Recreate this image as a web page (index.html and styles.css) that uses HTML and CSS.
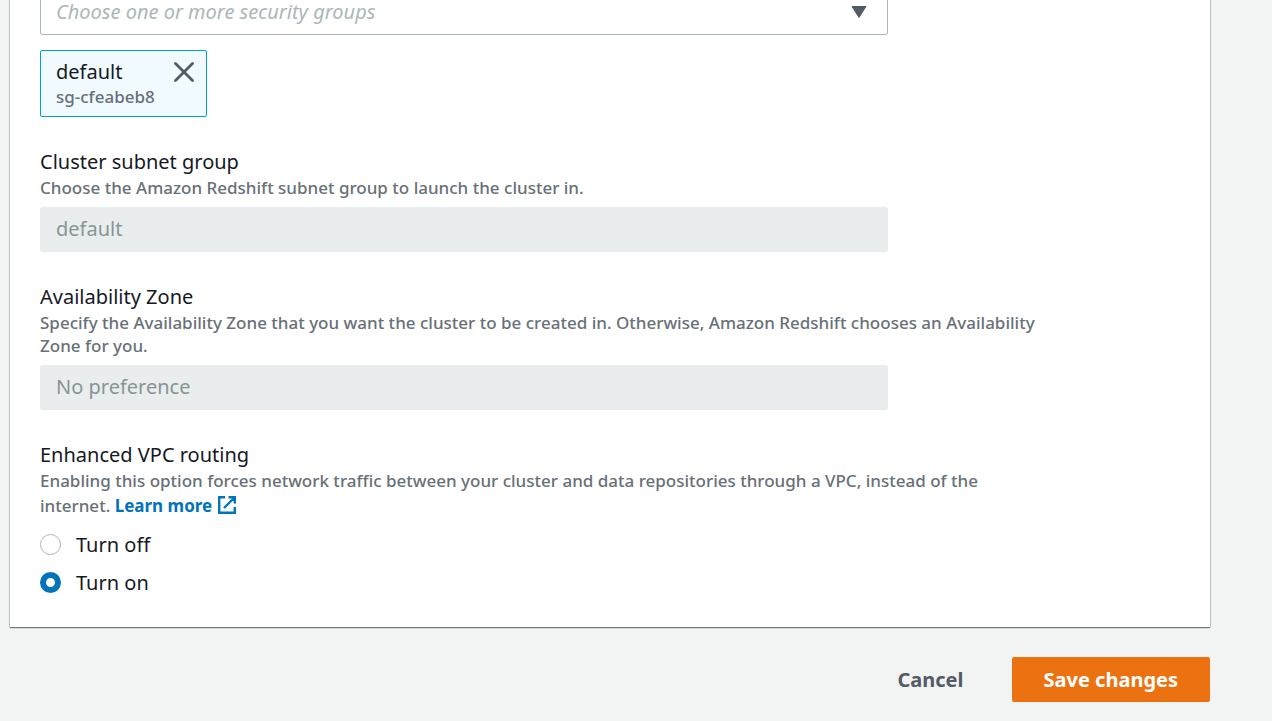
FILE: index.html
```html
<!DOCTYPE html>
<html lang="en">
<head>
<meta charset="utf-8">
<meta name="viewport" content="width=device-width, initial-scale=1">
<title>Network and security settings</title>
<link rel="stylesheet" href="styles.css">
</head>
<body>
<form class="page">
  <section class="panel">
    <div class="field">
      <div class="picker">
        <select class="control placeholder" aria-label="VPC security groups">
          <option>Choose one or more security groups</option>
        </select>
        <svg class="caret" viewBox="0 0 16 12" aria-hidden="true"><path d="M1 .5h14L8 11.500z" fill="#545b64" stroke="#545b64" stroke-linejoin="round"/></svg>
      </div>
      <div class="token">
        <div>
          <div class="token-name">default</div>
          <div class="token-id">sg-cfeabeb8</div>
        </div>
        <button class="dismiss" type="button" aria-label="Remove default">
          <svg viewBox="0 0 20 20" aria-hidden="true"><path d="M1.500 1.500l17 17M18.500 1.500l-17 17" fill="none" stroke="#545b64" stroke-width="2.800" stroke-linecap="round"/></svg>
        </button>
      </div>
    </div>

    <div class="field">
      <label class="label" for="subnet">Cluster subnet group</label>
      <p class="hint" id="subnet-hint">Choose the Amazon Redshift subnet group to launch the cluster in.</p>
      <select class="control" id="subnet" aria-describedby="subnet-hint" disabled><option>default</option></select>
    </div>

    <div class="field">
      <label class="label" for="zone">Availability Zone</label>
      <p class="hint" id="zone-hint">Specify the Availability Zone that you want the cluster to be created in. Otherwise, Amazon Redshift chooses an Availability Zone for you.</p>
      <select class="control" id="zone" aria-describedby="zone-hint" disabled><option>No preference</option></select>
    </div>

    <div class="field" role="radiogroup" aria-labelledby="routing">
      <div class="label" id="routing">Enhanced VPC routing</div>
      <p class="hint">Enabling this option forces network traffic between your cluster and data repositories through a VPC, instead of the internet. <a class="link" href="#">Learn more <svg class="external" viewBox="0 0 20 20" aria-hidden="true"><path d="M8 2.200H2.200v15.600h15.600V12M11.500 2.200h6.300v6.300M17.500 2.500L7 13" fill="none" stroke="#0073bb" stroke-width="2.400"/></svg></a></p>
      <div class="choices">
        <label class="choice"><input type="radio" name="routing">Turn off</label>
        <label class="choice"><input type="radio" name="routing" checked>Turn on</label>
      </div>
    </div>
  </section>

  <div class="actions">
    <button class="button" type="button">Cancel</button>
    <button class="button primary" type="submit">Save changes</button>
  </div>
</form>
</body>
</html>
```
FILE: styles.css
```css
* {
  box-sizing: border-box;
}

body {
  margin: 0;
  background: #f2f3f3;
  color: #16191f;
  font-family: "Noto Sans", "Open Sans", sans-serif;
  font-size: 20px;
  line-height: 27px;
}

.page {
  display: flow-root;
  padding: 0 62px 16px 10px;
}

/* The first control is scrolled partly past the top edge. */
.panel {
  display: flex;
  flex-direction: column;
  gap: 32px;
  margin-top: -10px;
  padding: 0 30px 31px;
  background: #fff;
  box-shadow: 0 1px 1px 0 rgba(0, 28, 36, 0.5), 0 0 2px 0 rgba(0, 28, 36, 0.4);
}

.picker {
  position: relative;
  max-width: 848px;
}

.control {
  display: block;
  width: 100%;
  max-width: 848px;
  height: 45px;
  padding: 0 15px 2px;
  border: 1px solid #aab7b8;
  border-radius: 2px;
  appearance: none;
  background: #fff;
  color: #16191f;
  font: inherit;
}

.control:disabled {
  border-color: #eaeded;
  background: #eaeded;
  color: #879596;
  opacity: 1;
}

.control.placeholder {
  color: #aab7b8;
  font-style: italic;
}

.caret {
  position: absolute;
  top: 16px;
  right: 21px;
  width: 16px;
  height: 12px;
  pointer-events: none;
}

.token {
  display: flex;
  align-items: flex-start;
  justify-content: space-between;
  width: 167px;
  margin-top: 15px;
  padding: 7px 12px 7px 15px;
  border: 1px solid #00a1c9;
  border-radius: 2px;
  background: #f1faff;
}

.token-id {
  color: #687078;
  font-size: 17px;
  font-weight: 500;
  line-height: 24px;
}

.dismiss {
  flex: none;
  margin: 4px 0;
  padding: 0;
  border: 0;
  background: none;
}

.dismiss svg {
  display: block;
  width: 20px;
  height: 20px;
}

.label {
  display: block;
  margin-bottom: 2px;
  line-height: 25px;
}

.hint {
  max-width: 1008px;
  margin: 0 0 8px;
  color: #687078;
  font-size: 17px;
  font-weight: 500;
  line-height: 23px;
}

.link {
  color: #0073bb;
  font-weight: 700;
  line-height: 27px;
  text-decoration: none;
}

.external {
  width: 20px;
  height: 20px;
  vertical-align: -3px;
}

.choices {
  display: grid;
  gap: 11px;
  margin-top: 12px;
}

.choice {
  display: flex;
  align-items: center;
  gap: 15px;
}

.choice input {
  width: 21px;
  height: 21px;
  margin: 0;
  border: 1px solid #aab7b8;
  border-radius: 50%;
  appearance: none;
  background: #fff;
}

.choice input:checked {
  border: 6px solid #0073bb;
}

.actions {
  display: flex;
  justify-content: flex-end;
  gap: 16px;
  margin-top: 30px;
}

.button {
  height: 45px;
  padding: 0 32px;
  border: 0;
  border-radius: 2px;
  background: none;
  color: #545b64;
  font: inherit;
  font-weight: 700;
}

.primary {
  background: #ec7211;
  color: #fff;
}
```
